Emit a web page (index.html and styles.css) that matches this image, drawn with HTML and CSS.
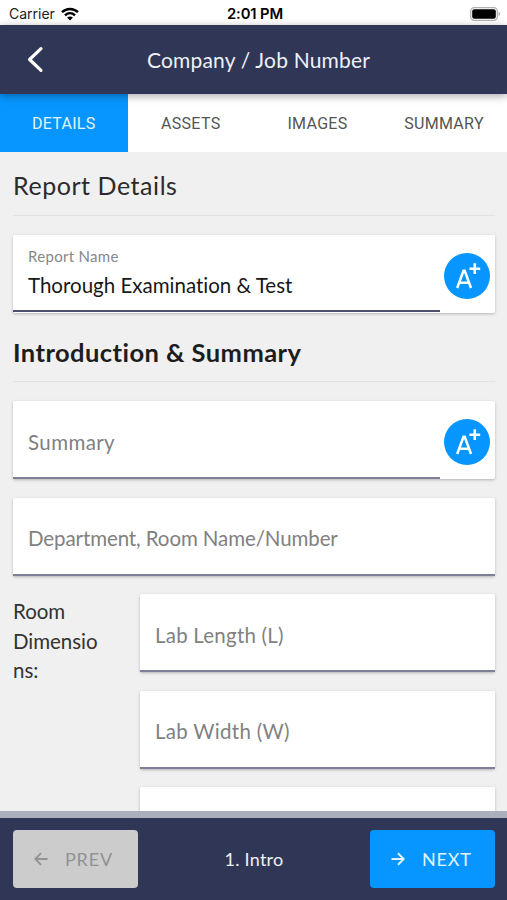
FILE: index.html
```html
<!DOCTYPE html>
<html lang="en">
<head>
<meta charset="utf-8">
<title>Report Details</title>
<link rel="stylesheet" href="styles.css">
</head>
<body>
<div class="app">
  <div class="status">
    <div class="carrier"><span>Carrier</span>
      <svg class="wifi" width="18" height="14" viewBox="0 0 18 14" fill="none" stroke="#000" stroke-width="2.5"><path d="M1 5.1C5.6.8 12.4.8 17 5.1M4 8.3c2.9-2.7 7.1-2.7 10 0"/><path d="M9 13.5 6.1 10.6c1.7-1.5 4.1-1.5 5.8 0z" fill="#000" stroke="none"/></svg>
    </div>
    <span class="clock">2:01 PM</span>
    <svg class="battery" width="31" height="14" viewBox="0 0 31 14"><rect x=".7" y=".7" width="26.6" height="12.6" rx="3.5" fill="#fff" stroke="#b2b2b2" stroke-width="1.3"/><rect x="2.2" y="2.2" width="23.6" height="9.6" rx="2" fill="#000"/><path d="M28.6 4.8c2 .8 2 3.600 0 4.400z" fill="#aaa"/></svg>
  </div>
  <header class="header">
    <svg class="back" width="18" height="28" viewBox="0 0 18 28" fill="none" stroke="#fff" stroke-width="3.2" stroke-linecap="round" stroke-linejoin="round"><path d="M15 3.700 3.600 14.500l11.400 10.900"/></svg>
    <h1 class="title">Company / Job Number</h1>
  </header>
  <nav class="tabs">
    <span class="tab active">DETAILS</span><span class="tab">ASSETS</span><span class="tab">IMAGES</span><span class="tab">SUMMARY</span>
  </nav>
  <main class="content">
    <h2 class="heading"><span class="h-light">Report Details</span></h2>
    <section class="card with-action">
      <div class="field filled"><span class="label">Report Name</span><span class="value">Thorough Examination &amp; Test</span></div>
      <svg class="grade" width="46" height="46" viewBox="0 0 46 46"><circle cx="23" cy="23" r="23" fill="#0796ff"/><path d="M13.200 35 19.500 17.700h1.200L27 35M15.400 29.800h9.400" fill="none" stroke="#fff" stroke-width="2.500"/><path d="M30.800 10.300v10.800M25.400 15.700h10.800" stroke="#fff" stroke-width="2.600"/></svg>
    </section>
    <h2 class="heading second"><span class="h-bold">Introduction &amp; Summary</span></h2>
    <section class="card with-action">
      <div class="field"><span class="hint summary">Summary</span></div>
      <svg class="grade" width="46" height="46" viewBox="0 0 46 46"><circle cx="23" cy="23" r="23" fill="#0796ff"/><path d="M13.200 35 19.500 17.700h1.200L27 35M15.400 29.800h9.400" fill="none" stroke="#fff" stroke-width="2.500"/><path d="M30.800 10.300v10.800M25.400 15.700h10.800" stroke="#fff" stroke-width="2.600"/></svg>
    </section>
    <section class="card"><div class="field"><span class="hint dept">Department, Room Name/Number</span></div></section>
    <div class="dimensions">
      <p class="dim-label">Room Dimensions:</p>
      <div class="dim-fields">
        <section class="card"><div class="field"><span class="hint length">Lab Length (L)</span></div></section>
        <section class="card"><div class="field"><span class="hint width">Lab Width (W)</span></div></section>
        <section class="card"><div class="field"></div></section>
      </div>
    </div>
  </main>
  <footer class="footer">
    <div class="btn prev"><svg width="14" height="14" viewBox="0 0 14 14" fill="none" stroke="currentColor" stroke-width="1.800"><path d="M13.500 7H1.500M7 1.200 1.300 7 7 12.800"/></svg><span>PREV</span></div>
    <span class="step">1. Intro</span>
    <div class="btn next"><svg width="14" height="14" viewBox="0 0 14 14" fill="none" stroke="currentColor" stroke-width="2"><path d="M.5 7h12M7 1.200 12.700 7 7 12.800"/></svg><span>NEXT</span></div>
  </footer>
</div>
</body>
</html>
```
FILE: styles.css
```css
* { box-sizing: border-box; }
body { margin: 0; font-family: Lato, sans-serif; font-variant-ligatures: none; background: #f0f0f0; }
svg { display: block; flex: none; }
.app { height: 900px; display: flex; flex-direction: column; overflow: hidden; }
.status { flex: none; height: 25.400px; background: #fff; display: grid; grid-template-columns: 1fr auto 1fr; align-items: center; padding: 2px 6px 0 9px; font: 14px/18px Inter, sans-serif; color: #222; }
.carrier { display: flex; align-items: center; gap: 6px; }
.clock { font-size: 14.800px; font-weight: 600; letter-spacing: -.1px; color: #000; }
.battery { justify-self: end; }
.header { flex: none; height: 68.200px; background: #303655; display: grid; grid-template-columns: 60px 1fr 50px; align-items: center; position: relative; z-index: 2; box-shadow: 0 2px 8px rgba(0,0,0,.35); }
.back { margin-left: 26px; }
.title { margin: 0; text-align: center; font-size: 21px; font-weight: 400; color: #eef0f8; letter-spacing: .18px; white-space: nowrap; }
.tabs { flex: none; height: 58.400px; background: #fff; display: grid; grid-template-columns: 127.500px 126.500px 127px 126px; }
.tab { display: flex; align-items: center; justify-content: center; padding-top: 1px; font: 16px Roboto, sans-serif; color: #555; letter-spacing: .3px; }
.active { background: #0796ff; color: #e2f3ff; }
.content { flex: 1; min-height: 0; overflow: hidden; padding: 0 12px 0 13px; }
.heading { margin: 0 0 19px; height: 64px; padding-top: 16.500px; border-bottom: 1px solid #e3e3e3; font-size: 25px; line-height: 34px; font-weight: 400; color: #2b2b2b; white-space: nowrap; }
.second { margin-top: -14px; height: 65px; padding-top: 17.500px; }
.h-light { letter-spacing: .55px; }
.h-bold { font-size: 25.500px; font-weight: 700; color: #1d1d1d; letter-spacing: .45px; }
.card { height: 78px; background: #fff; border-radius: 2px; box-shadow: 0 1px 3px rgba(0,0,0,.26); display: flex; margin-bottom: 18.500px; }
.with-action { gap: 4px; }
.field { flex: 1; height: 78px; border-bottom: 2px solid #7f8097; padding: 5px 15px 0; display: flex; flex-direction: column; justify-content: center; white-space: nowrap; }
.with-action .field { height: 77.500px; }
.with-action .filled { height: 77px; border-color: #50516f; padding-top: 0; }
.grade { margin: 18px 5px 0 0; }
.label { font-size: 15px; line-height: 18px; margin-top: 2px; color: #878787; letter-spacing: .3px; }
.value { font-size: 20.500px; line-height: 28px; margin-top: 6px; color: #171717; }
.hint { font-size: 20.500px; line-height: 28px; color: #818181; }
.summary { letter-spacing: .4px; }
.dept { letter-spacing: -.1px; }
.length { letter-spacing: .22px; }
.width { letter-spacing: .3px; }
.dimensions { display: grid; grid-template-columns: 90px 1fr; column-gap: 37px; }
.dim-label { margin: 3px 0 0; font-size: 20.500px; line-height: 29.500px; letter-spacing: -.05px; color: #333; overflow-wrap: anywhere; }
.footer { flex: none; height: 89px; background: #303655; border-top: 7px solid #abaebb; padding: 0 12px 0 13px; display: grid; grid-template-columns: 125px 1fr 125px; align-items: center; color: #eef0f8; }
.btn { height: 58px; border-radius: 4px; display: flex; align-items: center; padding-left: 20.500px; gap: 17.500px; font-size: 18px; letter-spacing: .8px; }
.prev { background: #ccc; color: #929292; }
.next { background: #0796ff; color: #e2f3ff; }
.step { text-align: center; font-size: 18px; letter-spacing: .25px; }
```
